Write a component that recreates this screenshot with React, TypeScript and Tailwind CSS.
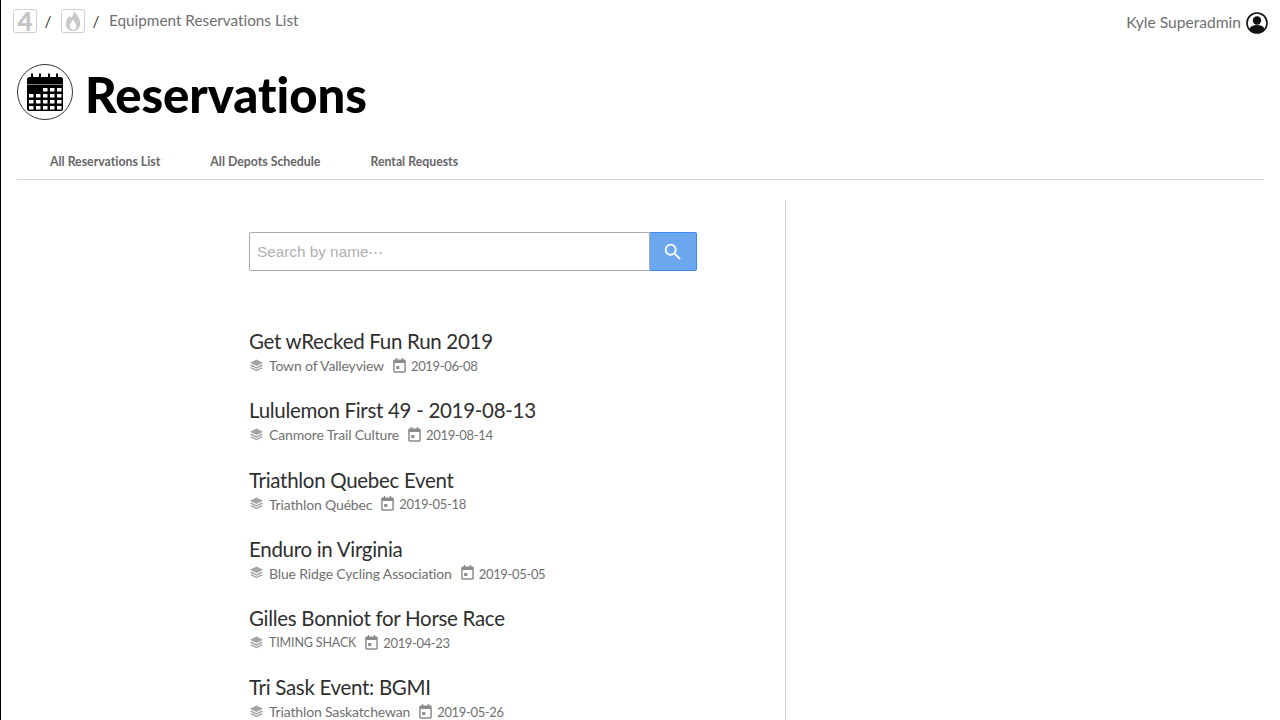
const reservations = [
  { name: "Get wRecked Fun Run 2019", org: "Town of Valleyview", date: "2019-06-08" },
  { name: "Lululemon First 49 - 2019-08-13", org: "Canmore Trail Culture", date: "2019-08-14" },
  { name: "Triathlon Quebec Event", org: "Triathlon Québec", date: "2019-05-18" },
  { name: "Enduro in Virginia", org: "Blue Ridge Cycling Association", date: "2019-05-05" },
  { name: "Gilles Bonniot for Horse Race", org: "TIMING SHACK", date: "2019-04-23", caps: true },
  { name: "Tri Sask Event: BGMI", org: "Triathlon Saskatchewan", date: "2019-05-26" },
];

function LayersIcon() {
  return (
    <svg viewBox="0 0 16 14" className="w-[15px] h-[13px] shrink-0 fill-[#a3a3a3] -mt-[2px]">
      <path d="M8 0.5 15 4 8 7.5 1 4z" />
      <path d="M2.6 6 8 8.800 13.400 6 15 6.900 8 10.400 1 6.900z" />
      <path d="M2.6 8.900 8 11.700 13.400 8.900 15 9.800 8 13.300 1 9.800z" />
    </svg>
  );
}

function DateIcon() {
  return (
    <svg viewBox="0 0 14 16" className="w-[13px] h-[15px] shrink-0 fill-[#8c8c8c] -mt-[2px]">
      <path
        fillRule="evenodd"
        d="M3 0h1.600v1.600h4.800V0H11v1.600h1.200c.9 0 1.600.7 1.600 1.600v11c0 .9-.7 1.600-1.600 1.600H1.800c-.9 0-1.600-.7-1.600-1.600v-11c0-.9.7-1.600 1.600-1.600H3zM1.800 5.400v8.800h10.400V5.400z"
      />
      <rect x="3.400" y="8.600" width="3.400" height="3.200" />
    </svg>
  );
}

function CalendarBadge() {
  const cells = [
    [0, 0, 1, 1, 1],
    [1, 1, 1, 1, 1],
    [1, 1, 1, 1, 1],
    [1, 1, 1, 1, 1],
  ];
  return (
    <div className="w-14 h-14 rounded-full border border-[#333] flex items-center justify-center shrink-0">
      <svg viewBox="0 0 38 40" className="w-[38px] h-10">
        <path d="M1 7.500C1 6 2 5 3.500 5h31C36 5 37 6 37 7.500V12.500H1z" fill="#000" />
        <path d="M1 13h36v24c0 1.100-.9 2-2 2H3c-1.100 0-2-.9-2-2z" fill="#000" />
        {[6, 14, 23, 31].map((x) => (
          <rect key={x} x={x - 1} y="1.500" width="2" height="5" fill="#000" />
        ))}
        {cells.map((row, r) =>
          row.map((on, c) =>
            on ? <rect key={`${r}-${c}`} x={3 + c * 7} y={16 + r * 6} width="4.500" height="3.500" fill="#fff" /> : null
          )
        )}
      </svg>
    </div>
  );
}

function UserIcon() {
  return (
    <svg viewBox="0 0 22 22" className="w-[22px] h-[22px] shrink-0">
      <circle cx="11" cy="11" r="10" fill="#fff" stroke="#111" strokeWidth="1.600" />
      <circle cx="11" cy="8.500" r="4.200" fill="#111" />
      <path d="M3.500 17c1-3 3.600-4 7.500-4s6.500 1 7.500 4A10 10 0 0 1 11 21a10 10 0 0 1-7.500-4z" fill="#111" />
    </svg>
  );
}

export default function App() {
  return (
    <div className="h-[720px] overflow-hidden bg-white border-l border-black font-['Lato','Noto_Sans',sans-serif] [font-variant-ligatures:none] text-[#333]">
      {/* Top bar */}
      <div className="flex justify-between pl-3 pr-3 pt-[9px] h-[52px]">
        <div className="flex items-start text-[15.300px] text-[#6f6f6f]">
          <div className="w-6 h-6 border border-[#cfcfcf] rounded-[3px] flex items-center justify-center text-[26px] leading-none font-black text-[#c4c4c4]">
            4
          </div>
          <span className="w-6 pr-[2px] text-center text-[#333] leading-6">/</span>
          <div className="w-6 h-6 border border-[#cfcfcf] rounded-[3px] flex items-center justify-center">
            <svg viewBox="0 0 14 18" className="w-4 h-5 fill-[#c9c9c9]">
              <path
                fillRule="evenodd"
                d="M7.500 0c.6 3-1 4.500-2.500 6.500-.5-.8-.8-1.500-.8-2.400C2 6.100.5 8.500.5 11.200.5 15 3.300 18 7 18s6.500-3 6.500-6.800C13.500 6.800 10.500 3 7.500 0zM7 16.800c-1.800 0-3-1.400-3-3.100C4 11.800 5.800 10 7 7.500c1.200 2.500 3 4.300 3 6.200 0 1.700-1.200 3.100-3 3.100z"
              />
            </svg>
          </div>
          <span className="w-6 pr-[2px] text-center text-[#333] leading-6">/</span>
          <span className="leading-[22px]">Equipment Reservations List</span>
        </div>
        <div className="flex items-center h-[27px] gap-[5px] text-[15.600px] text-[#6f6f6f]">
          <span className="leading-[27px]">Kyle Superadmin</span>
          <UserIcon />
        </div>
      </div>

      {/* Title */}
      <div className="flex items-center gap-3 pl-4 h-14 mt-3">
        <CalendarBadge />
        <h1 className="text-[49px] leading-none font-black text-black mt-[5px]">Reservations</h1>
      </div>

      {/* Tabs */}
      <div className="flex gap-[50px] mx-4 mt-[23px] pl-[33px] h-[37px] border-b border-[#d8d8d8] text-[12.300px] font-bold text-[#666] leading-[37px]">
        <span>All Reservations List</span>
        <span>All Depots Schedule</span>
        <span>Rental Requests</span>
      </div>

      {/* Main */}
      <div className="flex mt-5">
        <div className="w-[785px] h-[540px] border-r border-[#cfcfcf] pl-[248px] pt-8">
          <div className="flex w-[448px] h-[39px]">
            <div className="flex-1 border border-[#a9a9a9] rounded-l-[2px] pl-[7px] font-['Liberation_Sans',sans-serif] text-[15.300px] leading-[37px] text-[#b0b0b0]">
              Search by name⋯
            </div>
            <div className="w-[47px] bg-[#6aa7ef] border border-[#3f8aea] border-l-0 rounded-r-[2px] flex items-center justify-center">
              <svg viewBox="0 0 24 24" className="w-[22px] h-[22px] fill-white">
                <path d="M15.500 14h-.79l-.28-.27A6.470 6.470 0 0 0 16 9.500 6.500 6.500 0 1 0 9.500 16c1.610 0 3.090-.59 4.230-1.570l.27.28v.79l5 4.990L20.490 19l-4.990-5zm-6 0C7.010 14 5 11.990 5 9.500S7.010 5 9.500 5 14 7.010 14 9.500 11.990 14 9.500 14z" />
              </svg>
            </div>
          </div>

          <div className="mt-[56px] flex flex-col gap-[13.300px]">
            {reservations.map((r) => (
              <div key={r.name} className="h-[56px]">
                <div className="text-[20.500px] tracking-[-0.3px] leading-7 text-[#2f2f2f]">{r.name}</div>
                <div className="flex items-center h-[22px] text-sm tracking-[-0.15px] text-[#707070]">
                  <LayersIcon />
                  <span className={r.caps ? "ml-[5px] text-[12.500px]" : "ml-[5px]"}>{r.org}</span>
                  <span className="ml-[9px]"><DateIcon /></span>
                  <span className="ml-[5px] text-[13px] tracking-[-0.35px]">{r.date}</span>
                </div>
              </div>
            ))}
          </div>
        </div>
      </div>
    </div>
  );
}
